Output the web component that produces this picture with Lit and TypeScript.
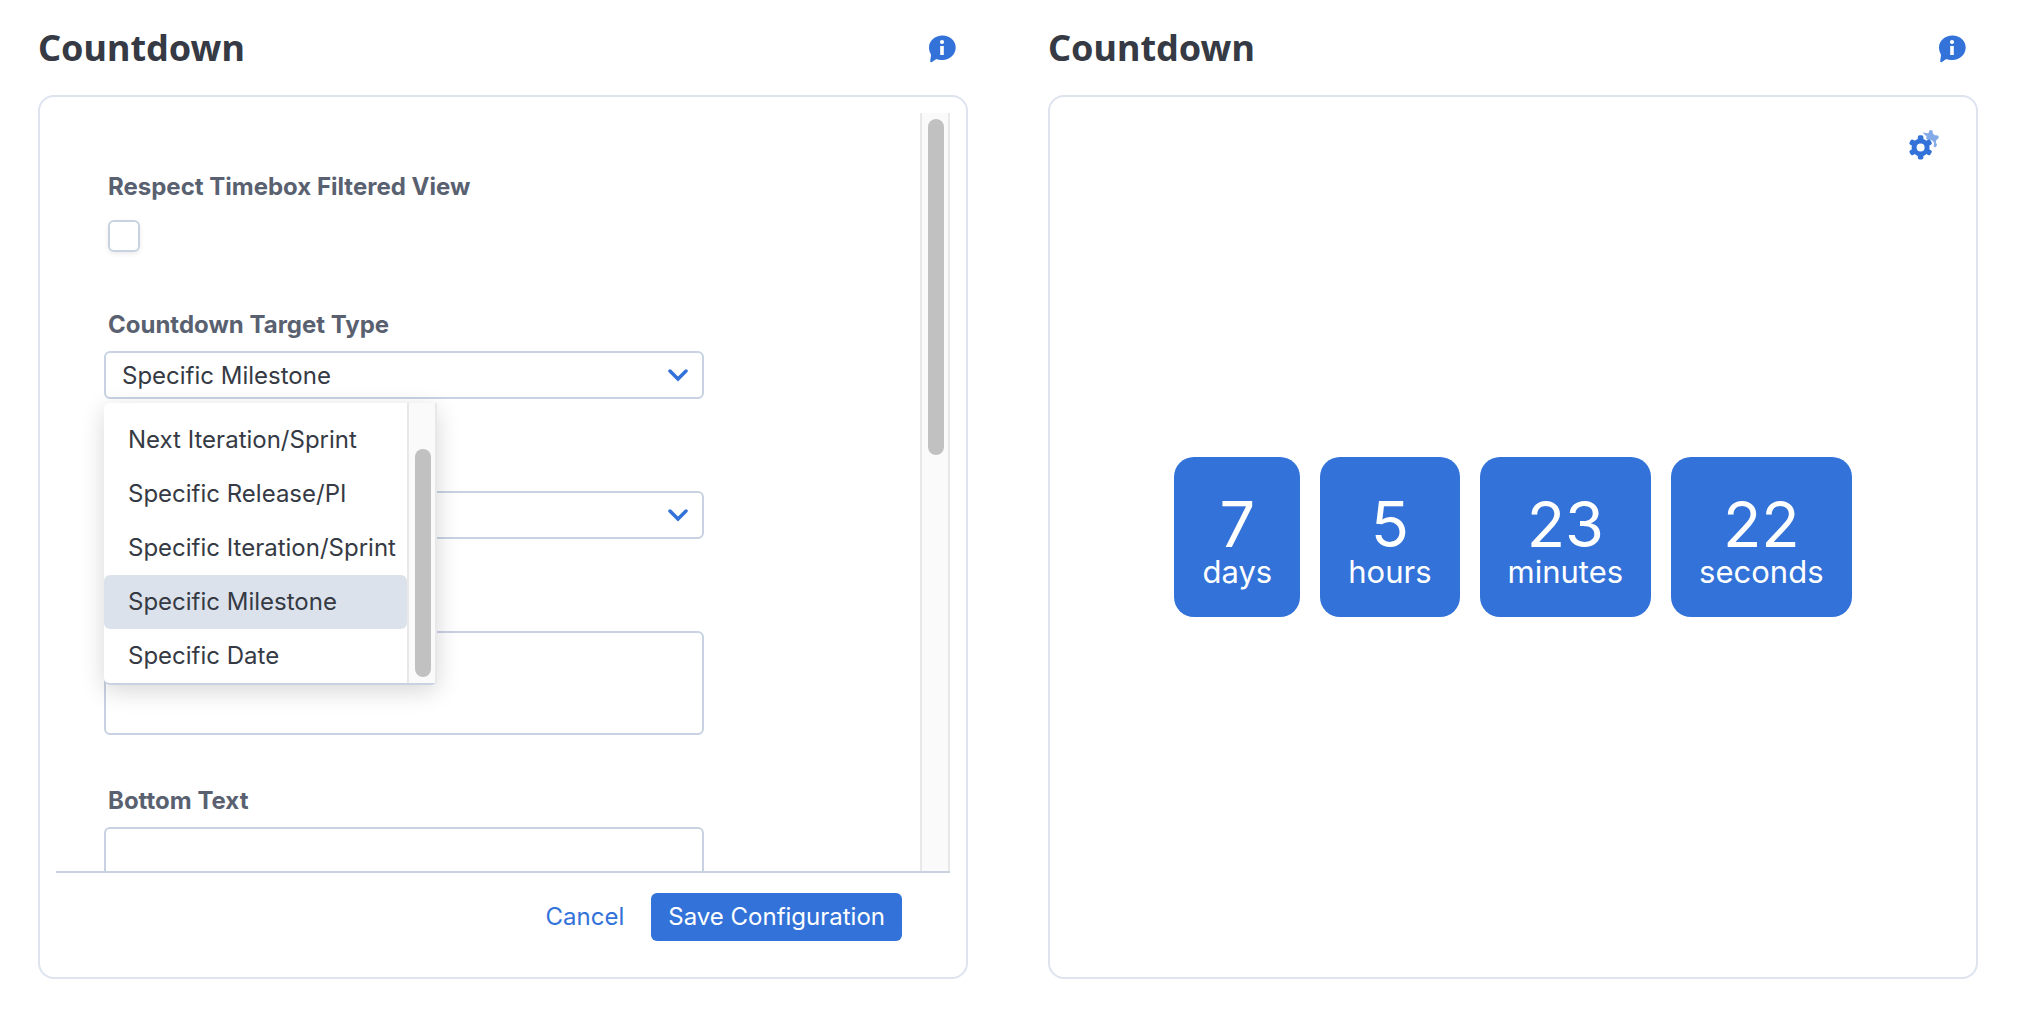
import { LitElement, html, css, svg } from "lit";
import { customElement, property } from "lit/decorators.js";

const chevron = svg`<path d="M2 3 L10 11 L18 3" fill="none" stroke="#3272d9" stroke-width="3.5" stroke-linecap="round" stroke-linejoin="miter"/>`;

@customElement("widget-card")
class WidgetCard extends LitElement {
  @property() heading = "";

  static styles = css`
    :host {
      display: flex;
      flex-direction: column;
      min-width: 0;
      min-height: 0;
    }
    .header {
      display: flex;
      align-items: center;
      justify-content: space-between;
      padding: 24px 10px 23px 0;
    }
    .title {
      margin: 0;
      font: 700 36px/48px "Noto Sans", sans-serif;
      color: #353a44;
    }
    .info {
      display: block;
      width: 32px;
      height: 32px;
      padding: 0;
      border: 0;
      background: none;
    }
    .info svg {
      display: block;
    }
    .frame {
      flex: 1;
      min-height: 0;
      display: grid;
      box-sizing: border-box;
      border: 2px solid #dde3ef;
      border-radius: 16px;
      background: #fff;
    }
  `;

  render() {
    return html`
      <header class="header">
        <h2 class="title">${this.heading}</h2>
        <button class="info" type="button" aria-label="About this widget">
          <svg width="32" height="32" viewBox="0 1 32 32" aria-hidden="true">
            <path
              fill="#3272d9"
              d="M16.5 4.6C23.9 4.6 29.7 9.7 29.7 16.6C29.7 23.5 23.9 29 16.5 29C14 29 12 28.7 10.3 28L6 31C4.9 31.5 4 31 4.2 30L5.1 23.8C3.8 21.7 3 19.2 3 16.6C3 9.7 9 4.6 16.5 4.6Z"
            />
            <circle cx="16" cy="11" r="2.1" fill="#fff" />
            <rect x="14.2" y="15" width="3.6" height="9" fill="#fff" />
          </svg>
        </button>
      </header>
      <div class="frame"><slot></slot></div>
    `;
  }
}

@customElement("countdown-config")
class CountdownConfig extends LitElement {
  private options = [
    "Next Iteration/Sprint",
    "Specific Release/PI",
    "Specific Iteration/Sprint",
    "Specific Milestone",
    "Specific Date",
  ];
  private selected = "Specific Milestone";

  static styles = css`
    :host {
      display: flex;
      flex-direction: column;
      min-height: 0;
      min-width: 0;
      padding: 16px 16px 0;
      font: 400 24px/28px Inter, sans-serif;
      color: #353a44;
    }
    .viewport {
      flex: 1 1 0;
      min-height: 0;
      display: flex;
      overflow: hidden;
      border-bottom: 2px solid #c8d2e3;
    }
    .form {
      flex: 1;
      min-width: 0;
      padding: 60px 48px 0;
    }
    .field {
      display: flex;
      flex-direction: column;
      gap: 12px;
      max-width: 600px;
      margin-bottom: 52px;
    }
    .field.tick {
      gap: 19px;
      margin-bottom: 59px;
      padding-left: 4px;
    }
    .field.bare {
      padding-top: 40px;
    }
    .label {
      padding-left: 4px;
      font-weight: 700;
      color: #596171;
    }
    .tick .label {
      padding-left: 0;
    }
    .checkbox {
      appearance: none;
      width: 32px;
      height: 32px;
      margin: 0;
      border: 2px solid #c8d2e3;
      border-radius: 6px;
      background: #fff;
      box-shadow: 0 2px 4px rgba(60, 66, 80, 0.1);
    }
    .combo {
      position: relative;
      display: grid;
      align-items: center;
    }
    .combo > * {
      grid-area: 1 / 1;
    }
    .select,
    .textarea {
      box-sizing: border-box;
      width: 100%;
      margin: 0;
      border: 2px solid #c8d2e3;
      border-radius: 6px;
      background: #fff;
      font: inherit;
      color: inherit;
    }
    .select {
      appearance: none;
      height: 48px;
      padding: 2px 16px 0;
    }
    .chevron {
      justify-self: end;
      margin-right: 16px;
      pointer-events: none;
    }
    .textarea {
      display: block;
      height: 104px;
      resize: none;
    }
    .menu {
      position: absolute;
      z-index: 2;
      top: 52px;
      left: 0;
      display: flex;
      height: 280px;
      border-bottom: 2px solid #c8d2e3;
      border-radius: 6px;
      background: #fff;
      box-shadow: 0 6px 24px rgba(0, 0, 0, 0.16);
    }
    .list {
      margin: 0;
      padding: 10px 0 0;
      list-style: none;
      width: 303px;
    }
    .option {
      padding: 0 0 0 24px;
      line-height: 54px;
      border-radius: 6px;
      white-space: nowrap;
    }
    .option.on {
      background: #dce2ec;
    }
    .track {
      box-sizing: border-box;
      width: 30px;
      padding: 6px;
      border: solid #e8e8e8;
      border-width: 0 2px;
      background: #fafafa;
      display: flex;
      flex-direction: column;
    }
    .thumb {
      width: 16px;
      height: 45%;
      margin: 0 auto;
      border-radius: 8px;
      background: #c1c1c1;
    }
    .menu .track {
      justify-content: flex-end;
    }
    .menu .thumb {
      height: 85%;
    }
    .actions {
      display: flex;
      justify-content: flex-end;
      gap: 10px;
      padding: 20px 48px 36px;
    }
    .btn {
      height: 48px;
      padding: 0 17px;
      border: 0;
      border-radius: 6px;
      background: none;
      font: 400 24px/28px Inter, sans-serif;
      color: #3272d9;
    }
    .btn.primary {
      background: #3272d9;
      color: #fff;
    }
  `;

  render() {
    const arrow = html`<svg class="chevron" width="20" height="14" viewBox="0 0 20 14" aria-hidden="true">${chevron}</svg>`;
    return html`
      <div class="viewport">
        <div class="form">
          <div class="field tick">
            <label class="label" for="respect">Respect Timebox Filtered View</label>
            <input class="checkbox" id="respect" type="checkbox" />
          </div>
          <div class="field">
            <label class="label" for="type">Countdown Target Type</label>
            <div class="combo">
              <select class="select" id="type">
                <option>${this.selected}</option>
              </select>
              ${arrow}
              <div class="menu">
                <ul class="list" role="listbox" aria-label="Countdown Target Type">
                  ${this.options.map(
                    (o) => html`<li
                      class="option ${o === this.selected ? "on" : ""}"
                      role="option"
                      aria-selected=${o === this.selected}
                    >${o}</li>`
                  )}
                </ul>
                <div class="track"><div class="thumb"></div></div>
              </div>
            </div>
          </div>
          <div class="field bare">
            <div class="combo">
              <select class="select" aria-label="Milestone"></select>
              ${arrow}
            </div>
          </div>
          <div class="field bare">
            <textarea class="textarea" aria-label="Top Text"></textarea>
          </div>
          <div class="field">
            <label class="label" for="bottom">Bottom Text</label>
            <textarea class="textarea" id="bottom"></textarea>
          </div>
        </div>
        <div class="track"><div class="thumb"></div></div>
      </div>
      <div class="actions">
        <button class="btn" type="button">Cancel</button>
        <button class="btn primary" type="button">Save Configuration</button>
      </div>
    `;
  }
}

@customElement("countdown-view")
class CountdownView extends LitElement {
  private units = [
    { value: 7, name: "days" },
    { value: 5, name: "hours" },
    { value: 23, name: "minutes" },
    { value: 22, name: "seconds" },
  ];

  static styles = css`
    :host {
      display: grid;
      min-width: 0;
      font-family: Inter, sans-serif;
    }
    .settings {
      grid-area: 1 / 1;
      place-self: start end;
      width: 36px;
      height: 36px;
      margin: 30px 34px;
      padding: 0;
      border: 0;
      background: none;
    }
    .settings svg {
      display: block;
    }
    .tiles {
      grid-area: 1 / 1;
      place-self: center;
      display: flex;
      gap: 20px;
    }
    .tile {
      display: flex;
      flex-direction: column;
      align-items: center;
      padding: 32px 28px;
      border-radius: 20px;
      background: #3272d9;
      color: #fff;
    }
    .value {
      font-size: 63px;
      line-height: 70px;
    }
    .unit {
      font-size: 31px;
      line-height: 26px;
    }
  `;

  render() {
    return html`
      <div class="tiles" role="timer">
        ${this.units.map(
          (u) => html`<div class="tile">
            <span class="value">${u.value}</span>
            <span class="unit">${u.name}</span>
          </div>`
        )}
      </div>
      <button class="settings" type="button" aria-label="Settings">
        <svg width="36" height="36" viewBox="0 0 36 36" aria-hidden="true">
          <path
            fill="#84aae8"
            d="M17 5.3L19.500 6L22.3 6.3L23.5 3.5Q25 2.3 26.4 3.5L27 6.8L29 8.3L32 8.500Q33.5 9.7 32.3 11.5L30.2 13.2L29.8 15.5L31 17.5L30 20Q28.5 20.7 27.6 19L28.3 16.5Q27.300 13.4 24.5 12.8L22 13L20.2 11.8L20.600 9.200L18 7.200Z"
          />
          <g fill="#3272d9" transform="translate(14.6 20.4)">
            ${[0, 60, 120, 180, 240, 300].map(
              (a) => svg`<rect x="-2.8" y="-12.1" width="5.6" height="9" rx="1.8" transform="rotate(${a})"/>`
            )}
            <circle r="9" />
            <circle r="4" fill="#fff" />
          </g>
        </svg>
      </button>
    `;
  }
}

@customElement("app-root")
class AppRoot extends LitElement {
  static styles = css`
    :host {
      display: block;
    }
    .page {
      box-sizing: border-box;
      height: 100vh;
      display: grid;
      grid-template-columns: 1fr 1fr;
      grid-template-rows: minmax(0, 1fr);
      gap: 80px;
      padding: 0 44px 51px 38px;
      background: #fff;
    }
  `;

  render() {
    return html`
      <main class="page">
        <widget-card heading="Countdown"><countdown-config></countdown-config></widget-card>
        <widget-card heading="Countdown"><countdown-view></countdown-view></widget-card>
      </main>
    `;
  }
}
